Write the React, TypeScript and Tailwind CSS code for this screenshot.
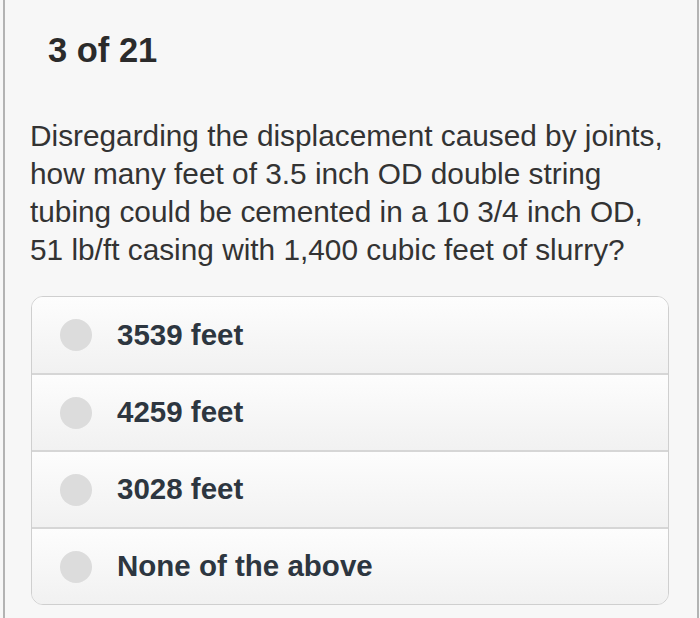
const options = ['3539 feet', '4259 feet', '3028 feet', 'None of the above'];

export default function App() {
  return (
    <div className="h-[618px] w-[700px] bg-[#f7f7f7] font-['Liberation_Sans',Arial,sans-serif]">
      <div className="ml-[3px] h-full w-[696px] border-x-2 border-[#b3b3b3] pl-[25px] pt-[30px]">
        <h1 className="ml-[18px] text-[34.5px] font-bold leading-[40px] text-[#2b2b2b]">3 of 21</h1>

        <p className="mt-[47px] text-[29.8px] leading-[38px] text-[#333]">
          Disregarding the displacement caused by joints,
          <br />
          how many feet of 3.5 inch OD double string
          <br />
          tubing could be cemented in a 10 3/4 inch OD,
          <br />
          51 lb/ft casing with 1,400 cubic feet of slurry?
        </p>

        {/* Answers */}
        <div className="mt-[27px] ml-px w-[638px] overflow-hidden rounded-[12px] border border-[#cfcfcf]">
          {options.map((opt, i) => (
            <div
              key={opt}
              className={`flex items-center bg-gradient-to-b from-[#fdfdfd] to-[#f1f1f1] pl-[28px] ${
                i > 0 ? 'h-[77px] border-t-2 border-[#d6d6d6]' : 'h-[76px]'
              }`}
            >
              <span className="h-[32px] w-[32px] shrink-0 rounded-full bg-[#dcdcdc]" />
              <span className="ml-[25px] text-[29.5px] font-bold text-[#2d3640]">{opt}</span>
            </div>
          ))}
        </div>
      </div>
    </div>
  );
}
